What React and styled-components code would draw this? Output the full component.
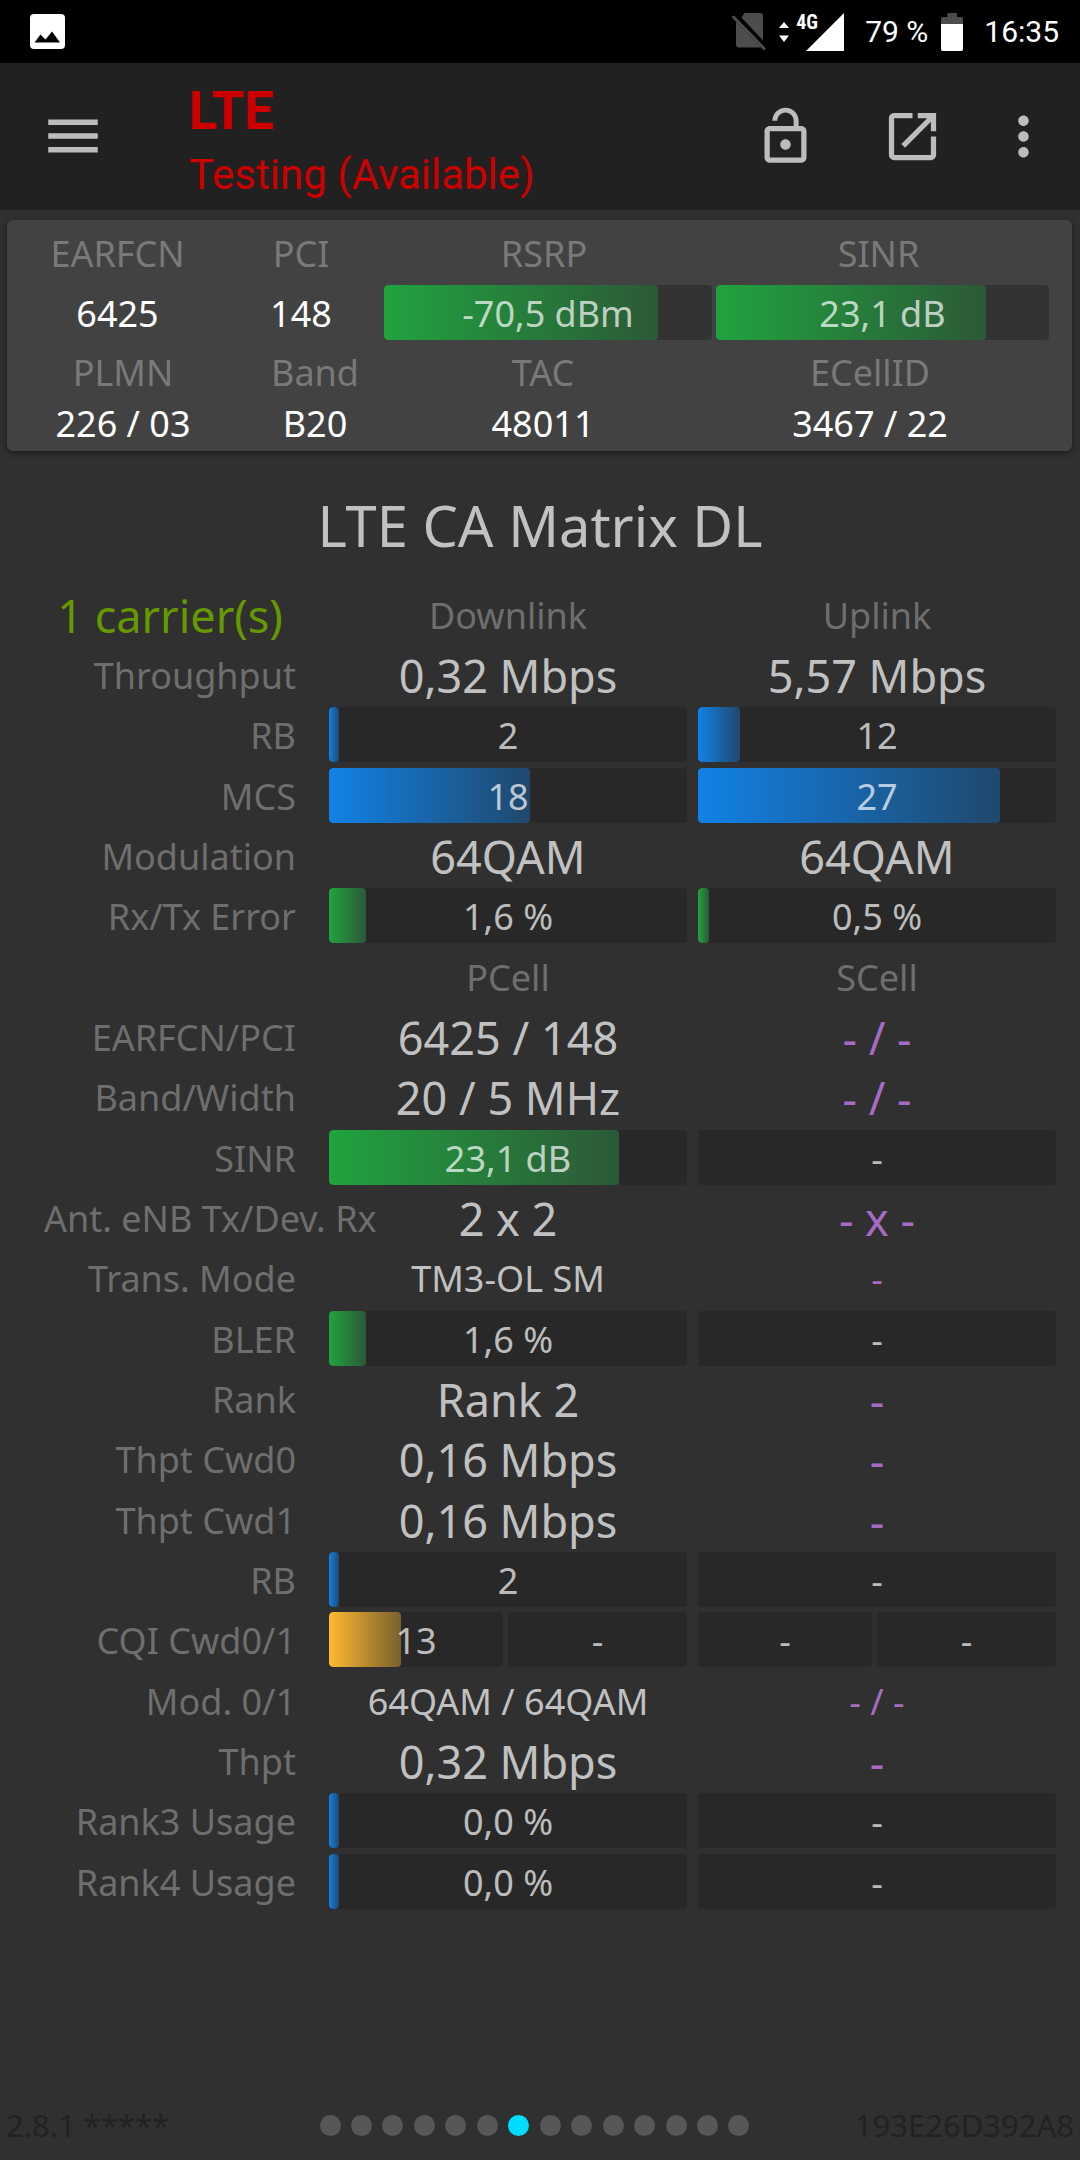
import React from 'react'
import styled, { createGlobalStyle } from 'styled-components';


const GlobalStyle = createGlobalStyle`
    *{
        box-sizing:border-box;
    }
    body{
        margin:0;
        background-color:#303030;
        font-family:"Noto Sans", "Open Sans", sans-serif;
        font-size:36px;
        color:#c1c1c1;
    }
`;

const Container = styled.div`
    min-height:100vh;
    display:flex;
    flex-direction:column;
`;

/* status bar */

const StatusBar = styled.div`
    height:63px;
    padding:0 21px 0 30px;
    display:flex;
    align-items:center;
    background-color:black;
    color:white;
    font-family:Roboto, sans-serif;
    font-size:30px;
`;

const StatusIcons = styled.div`
    margin-left:auto;
    display:flex;
    align-items:center;
    gap:13px;
`;

const Signal = styled.div`
    position:relative;
    width:48px;
    height:38px;
    margin-left:-6px;
    display:flex;
    justify-content:flex-end;
`;

const NetworkType = styled.span`
    position:absolute;
    top:0;
    left:0;
    font-family:"Roboto Condensed", "Liberation Sans Narrow", Roboto, sans-serif;
    font-size:20px;
    line-height:18px;
    font-weight:700;
`;

const Percent = styled.span`
    margin-left:8px;
`;

const Clock = styled.span`
    margin-left:8px;
`;

/* app bar */

const AppBar = styled.header`
    height:147px;
    padding:0 10px 1px 0;
    display:flex;
    align-items:center;
    background-color:#212121;
`;

const IconButton = styled.button`
    width:${props=>props.$width};
    height:100px;
    padding:0;
    border:none;
    display:flex;
    align-items:center;
    justify-content:center;
    background-color:transparent;
    color:#bdbdbd;
    cursor:pointer;
`;

const Titles = styled.div`
    flex:1;
    padding:13px 0 0 43px;
    font-family:Roboto, sans-serif;
    line-height:64px;
    color:#cc0000;
`;

const AppTitle = styled.h1`
    margin:0;
    font-size:53px;
    font-weight:700;
    line-height:64px;
`;

const Subtitle = styled.div`
    font-size:42px;
`;

/* serving cell card */

const Card = styled.section`
    margin:10px 8px 0 7px;
    padding:1px 0 9px;
    border-radius:6px;
    background-color:#424242;
    box-shadow:0 2px 6px rgba(0, 0, 0, 0.45);
`;

const CellInfo = styled.dl`
    margin:0;
    padding:0 23px 0 10px;
    display:grid;
    grid-template-columns:201fr 158fr 328fr 333fr;
    gap:4px;
`;

const CellIds = styled(CellInfo)`
    padding-right:17px;
    grid-template-columns:212fr 172fr 284fr 370fr;
    gap:0;
`;

const Field = styled.div`
    text-align:center;
    white-space:nowrap;
`;

const FieldName = styled.dt`
    padding:2px ${props=>props.$bar ? "8px" : "0"} 0 0;
    line-height:62px;
    color:#797979;
`;

const FieldValue = styled.dd`
    height:${props=>props.$compact ? "38px" : "55px"};
    margin:0;
    line-height:${props=>props.$compact ? "40px" : "57px"};
    color:white;
`;

/* bars */

const Track = styled.div`
    position:relative;
    height:55px;
    border-radius:4px;
    overflow:hidden;
    background-color:${props=>props.$onCard ? "#333333" : "#282828"};
    color:rgba(255, 255, 255, 0.71);
    line-height:57px;
    text-align:center;
`;

const fills = {
    green: "#20a33f, #2c5937",
    blue: "#1182e6, #20486c",
    amber: "#ffb931, #78602e",
};

const Fill = styled.div`
    position:absolute;
    top:0;
    bottom:0;
    left:0;
    min-width:10px;
    border-radius:4px;
    background-image:linear-gradient(to right, ${props=>fills[props.$tone]});
`;

const BarText = styled.span`
    position:relative;
`;

const BarPair = styled.div`
    display:grid;
    grid-template-columns:174fr 179fr;
    gap:5px;
`;

/* matrix */

const Main = styled.main`
    padding-right:19px;
`;

const Heading = styled.h2`
    margin:36px 0 21px 19px;
    font-size:56px;
    font-weight:400;
    line-height:76px;
    text-align:center;
`;

const Matrix = styled.table`
    width:100%;
    table-layout:fixed;
    border-collapse:collapse;

    tr{
        height:60px;
    }
    tr:nth-child(3n){
        height:61px;
    }
`;

const LabelCol = styled.col`
    width:323px;
`;

const ColumnName = styled.th`
    padding:3px 5px 0 6px;
    font-weight:400;
    line-height:54px;
    color:#6e6e6e;
`;

const RowName = styled.th`
    padding:3px 27px 0 44px;
    font-weight:400;
    line-height:54px;
    text-align:right;
    white-space:nowrap;
    color:#6e6e6e;
`;

const Carriers = styled(RowName)`
    font-size:45px;
    text-align:center;
    color:#669900;
`;

const Cell = styled.td`
    padding:3px 5px 0 6px;
    font-size:${props=>props.$small ? "36px" : "45px"};
    line-height:54px;
    text-align:center;
    white-space:nowrap;
    color:${props=>props.$muted && "#a76bc5"};
`;

const BarCell = styled.td`
    padding:0 5px 0 6px;
`;

/* footer */

const Footer = styled.footer`
    margin-top:auto;
    padding:0 6px 15px;
    display:grid;
    grid-template-columns:316fr 430px 327fr;
    align-items:center;
    font-size:31px;
    line-height:40px;
    color:#222222;
`;

const Device = styled.span`
    text-align:right;
`;

const Pages = styled.nav`
    display:flex;
    justify-content:space-between;
`;

const PageDot = styled.button`
    width:21px;
    height:21px;
    padding:0;
    border:none;
    border-radius:50%;
    background-color:${props=>props.$active ? "#00dcff" : "#575757"};
`;

const linkRows = [
    { name: "Throughput", cells: ["0,32 Mbps", "5,57 Mbps"] },
    { name: "RB", bars: [[{ text: "2", tone: "blue", value: 2 }], [{ text: "12", tone: "blue", value: 11.7 }]] },
    { name: "MCS", bars: [[{ text: "18", tone: "blue", value: 56.2 }], [{ text: "27", tone: "blue", value: 84.4 }]] },
    { name: "Modulation", cells: ["64QAM", "64QAM"] },
    { name: "Rx/Tx Error", bars: [[{ text: "1,6 %", tone: "green", value: 10.3 }], [{ text: "0,5 %", tone: "green", value: 3.1 }]] },
];

const cellRows = [
    { name: "EARFCN/PCI", cells: ["6425 / 148", "- / -"] },
    { name: "Band/Width", cells: ["20 / 5 MHz", "- / -"] },
    { name: "SINR", bars: [[{ text: "23,1 dB", tone: "green", value: 80.9 }], [{ text: "-" }]] },
    { name: "Ant. eNB Tx/Dev. Rx", cells: ["2 x 2", "- x -"] },
    { name: "Trans. Mode", cells: ["TM3-OL SM", "-"], small: true },
    { name: "BLER", bars: [[{ text: "1,6 %", tone: "green", value: 10.3 }], [{ text: "-" }]] },
    { name: "Rank", cells: ["Rank 2", "-"] },
    { name: "Thpt Cwd0", cells: ["0,16 Mbps", "-"] },
    { name: "Thpt Cwd1", cells: ["0,16 Mbps", "-"] },
    { name: "RB", bars: [[{ text: "2", tone: "blue", value: 2 }], [{ text: "-" }]] },
    { name: "CQI Cwd0/1", bars: [[{ text: "13", tone: "amber", value: 41.2 }, { text: "-" }], [{ text: "-" }, { text: "-" }]] },
    { name: "Mod. 0/1", cells: ["64QAM / 64QAM", "- / -"], small: true },
    { name: "Thpt", cells: ["0,32 Mbps", "-"] },
    { name: "Rank3 Usage", bars: [[{ text: "0,0 %", tone: "blue", value: 0 }], [{ text: "-" }]] },
    { name: "Rank4 Usage", bars: [[{ text: "0,0 %", tone: "blue", value: 0 }], [{ text: "-" }]] },
];

const Bar = ({ text, tone, value, onCard }) => {
  return (
      <Track $onCard={onCard}>
          {tone && <Fill $tone={tone} style={{ width: `${value}%` }}/>}
          <BarText>{text}</BarText>
      </Track>
  )
}

const Row = ({ row }) => {
  return (
      <tr>
          <RowName scope="row">{row.name}</RowName>
          {row.cells && row.cells.map((text, i) => (
              <Cell key={i} $small={row.small} $muted={text.startsWith("-")}>{text}</Cell>
          ))}
          {row.bars && row.bars.map((bars, i) => (
              <BarCell key={i}>
                  {bars.length > 1
                      ? <BarPair>{bars.map((bar, j) => <Bar key={j} {...bar}/>)}</BarPair>
                      : <Bar {...bars[0]}/>}
              </BarCell>
          ))}
      </tr>
  )
}

const Status = () => {
  return (
      <StatusBar>
          <svg width="35" height="35" viewBox="0 0 35 35">
              <rect width="35" height="35" rx="4" fill="#fff"/>
              <path d="M4.500 28.500L10.500 20.500L15.500 25.500L22 17.500L30 28.500Z" fill="#000"/>
          </svg>
          <StatusIcons>
              <svg width="34" height="37" viewBox="0 0 34 37">
                  <path d="M12.500 0H28Q31 0 31 3V27.500L9.500 4.500ZM4 8.500L29 34.500H7Q4 34.500 4 31.500Z" fill="#4d4d4d"/>
                  <path d="M1.500 4L32 35.500" stroke="#4d4d4d" strokeWidth="3" strokeLinecap="round"/>
              </svg>
              <svg width="10" height="20" viewBox="0 0 10 20" fill="#fff">
                  <path d="M5 0L10 6H0ZM5 20L10 13.500H0Z"/>
              </svg>
              <Signal>
                  <svg width="38" height="38" viewBox="0 0 38 38">
                      <path d="M38 0V38H0Z" fill="#fff"/>
                  </svg>
                  <NetworkType>4G</NetworkType>
              </Signal>
              <Percent>79 %</Percent>
              <svg width="22" height="38" viewBox="0 0 22 38">
                  <path d="M6.500 0H16V4H20Q22 4 22 6V11H0V6Q0 4 2 4H6.500Z" fill="#4d4d4d"/>
                  <path d="M0 11H22V36Q22 38 20 38H2Q0 38 0 36Z" fill="#fff"/>
              </svg>
              <Clock>16:35</Clock>
          </StatusIcons>
      </StatusBar>
  )
}

const App = () => {
  return (
      <Container>
      <GlobalStyle/>
      <Status/>
      <AppBar>
          <IconButton $width="146px" aria-label="Menu">
              <svg width="66" height="66" viewBox="0 0 24 24" fill="currentColor">
                  <path d="M3 18h18v-2H3v2zm0-5h18v-2H3v2zm0-7v2h18V6H3z"/>
              </svg>
          </IconButton>
          <Titles>
              <AppTitle>LTE</AppTitle>
              <Subtitle>Testing (Available)</Subtitle>
          </Titles>
          <IconButton $width="127px" aria-label="Lock">
              <svg width="63" height="63" viewBox="0 0 24 24" fill="currentColor">
                  <path d="M12 17c1.100 0 2-.9 2-2s-.9-2-2-2-2 .9-2 2 .9 2 2 2zm6-9h-1V6c0-2.760-2.240-5-5-5S7 3.240 7 6h1.900c0-1.710 1.390-3.100 3.100-3.100s3.100 1.390 3.100 3.100v2H6c-1.100 0-2 .9-2 2v10c0 1.100.9 2 2 2h12c1.100 0 2-.9 2-2V10c0-1.100-.9-2-2-2zm0 12H6V10h12v10z"/>
              </svg>
          </IconButton>
          <IconButton $width="127px" aria-label="Open">
              <svg width="63" height="63" viewBox="0 0 24 24" fill="currentColor">
                  <path d="M14 3v2h3.590l-9.830 9.830 1.410 1.410L19 6.410V10h2V3M19 19H5V5h7V3H5c-1.110 0-2 .9-2 2v14a2 2 0 0 0 2 2h14a2 2 0 0 0 2-2v-7h-2v7z"/>
              </svg>
          </IconButton>
          <IconButton $width="94px" aria-label="More">
              <svg width="63" height="63" viewBox="0 0 24 24" fill="currentColor">
                  <path d="M12 8c1.100 0 2-.9 2-2s-.9-2-2-2-2 .9-2 2 .9 2 2 2zm0 2c-1.100 0-2 .9-2 2s.9 2 2 2 2-.9 2-2-.9-2-2-2zm0 6c-1.100 0-2 .9-2 2s.9 2 2 2 2-.9 2-2-.9-2-2-2z"/>
              </svg>
          </IconButton>
      </AppBar>

      <Card>
          <CellInfo>
              <Field>
                  <FieldName>EARFCN</FieldName>
                  <FieldValue>6425</FieldValue>
              </Field>
              <Field>
                  <FieldName>PCI</FieldName>
                  <FieldValue>148</FieldValue>
              </Field>
              <Field>
                  <FieldName $bar>RSRP</FieldName>
                  <FieldValue><Bar text="-70,5 dBm" tone="green" value={83.6} onCard/></FieldValue>
              </Field>
              <Field>
                  <FieldName $bar>SINR</FieldName>
                  <FieldValue><Bar text="23,1 dB" tone="green" value={81} onCard/></FieldValue>
              </Field>
          </CellInfo>
          <CellIds>
              <Field>
                  <FieldName>PLMN</FieldName>
                  <FieldValue $compact>226 / 03</FieldValue>
              </Field>
              <Field>
                  <FieldName>Band</FieldName>
                  <FieldValue $compact>B20</FieldValue>
              </Field>
              <Field>
                  <FieldName>TAC</FieldName>
                  <FieldValue $compact>48011</FieldValue>
              </Field>
              <Field>
                  <FieldName>ECellID</FieldName>
                  <FieldValue $compact>3467 / 22</FieldValue>
              </Field>
          </CellIds>
      </Card>

      <Main>
          <Heading>LTE CA Matrix DL</Heading>
          <Matrix>
              <colgroup>
                  <LabelCol/>
                  <col/>
                  <col/>
              </colgroup>
              <tbody>
                  <tr>
                      <Carriers scope="col">1 carrier(s)</Carriers>
                      <ColumnName scope="col">Downlink</ColumnName>
                      <ColumnName scope="col">Uplink</ColumnName>
                  </tr>
                  {linkRows.map(row => <Row key={row.name} row={row}/>)}
              </tbody>
              <tbody>
                  <tr>
                      <td/>
                      <ColumnName scope="col">PCell</ColumnName>
                      <ColumnName scope="col">SCell</ColumnName>
                  </tr>
                  {cellRows.map(row => <Row key={row.name} row={row}/>)}
              </tbody>
          </Matrix>
      </Main>

      <Footer>
          <span>2.8.1 *****</span>
          <Pages>
              {Array.from({ length: 14 }, (_, i) => (
                  <PageDot key={i} $active={i === 6} aria-label={`Page ${i + 1}`}/>
              ))}
          </Pages>
          <Device>193E26D392A8</Device>
      </Footer>
      </Container>
  )
}

export default App
